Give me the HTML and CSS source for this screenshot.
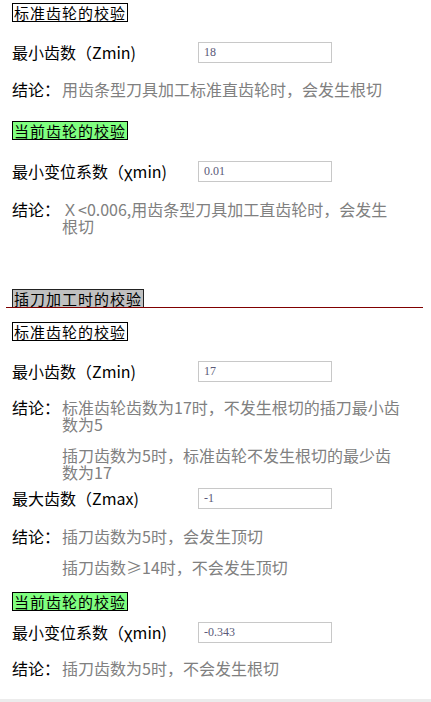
FILE: index.html
```html
<!DOCTYPE html>
<html lang="zh-CN">
<head>
<meta charset="utf-8">
<title>校验</title>
<link rel="stylesheet" href="styles.css">
</head>
<body>
<div class="page">
  <div class="sec sec-1">
    <span class="title title-white">标准齿轮的校验</span>
    <div class="row row-1"><span class="label">最小齿数（Zmin)</span><span class="input">18</span></div>
    <div class="concl concl-1"><span class="ck">结论：</span><div class="ct"><p>用齿条型刀具加工标准直齿轮时，会发生根切</p></div></div>
    <span class="title title-green t2">当前齿轮的校验</span>
    <div class="row row-2"><span class="label">最小变位系数（χmin)</span><span class="input">0.01</span></div>
    <div class="concl concl-2"><span class="ck">结论：</span><div class="ct"><p>Ｘ&lt;0.006,用齿条型刀具加工直齿轮时，会发生<br>根切</p></div></div>
  </div>
  <div class="divider"><span class="title title-gray">插刀加工时的校验</span></div>
  <div class="sec sec-2">
    <span class="title title-white t4">标准齿轮的校验</span>
    <div class="row row-3"><span class="label">最小齿数（Zmin)</span><span class="input">17</span></div>
    <div class="concl concl-3"><span class="ck">结论：</span><div class="ct"><p>标准齿轮齿数为17时，不发生根切的插刀最小齿<br>数为5</p><p>插刀齿数为5时，标准齿轮不发生根切的最少齿<br>数为17</p></div></div>
    <div class="row row-4"><span class="label">最大齿数（Zmax)</span><span class="input">-1</span></div>
    <div class="concl concl-4"><span class="ck">结论：</span><div class="ct"><p>插刀齿数为5时，会发生顶切</p><p>插刀齿数≥14时，不会发生顶切</p></div></div>
    <span class="title title-green t5">当前齿轮的校验</span>
    <div class="row row-5"><span class="label">最小变位系数（χmin)</span><span class="input">-0.343</span></div>
    <div class="concl concl-5"><span class="ck">结论：</span><div class="ct"><p>插刀齿数为5时，不会发生根切</p></div></div>
  </div>
  <div class="footer"></div>
</div>
</body>
</html>
```

FILE: styles.css
```css
html, body {
  margin: 0;
  padding: 0;
  background: #fff;
}
body {
  font-family: "Noto Sans CJK SC", "DejaVu Sans", sans-serif;
  font-size: 16px;
  color: #000;
  width: 431px;
  height: 702px;
  overflow: hidden;
}
.page {
  display: flex;
  flex-direction: column;
  height: 702px;
}
.sec {
  display: flex;
  flex-direction: column;
  align-items: flex-start;
  padding-left: 12px;
}
.title {
  display: inline-block;
  font-size: 15px;
  line-height: 17px;
  padding: 0 1px;
  border: 1px solid #000;
  white-space: nowrap;
  letter-spacing: 1px;
}
.title-white { background: #fff; }
.title-green { background: #80ff80; }
.title-gray { background: #c0c0c0; border-color: #222; border-bottom: none; }
.sec-1 > .title-white { margin-top: 3px; }
.row {
  display: flex;
  align-items: center;
  height: 20px;
}
.label {
  width: 186px;
  white-space: nowrap;
  line-height: 20px;
}
.input {
  box-sizing: border-box;
  width: 134px;
  height: 21px;
  border: 1px solid #c8c8c8;
  padding-left: 5px;
  font-family: "Liberation Serif", serif;
  font-size: 12px;
  line-height: 19px;
  color: #5a5a78;
}
.row-1 { margin-top: 20px; }
.concl {
  display: flex;
  align-items: flex-start;
}
.ck {
  width: 50px;
  line-height: 17px;
  flex: none;
}
.ct {
  color: #808080;
  line-height: 17px;
  display: flex;
  flex-direction: column;
  gap: 14px;
}
.ct p { margin: 0; white-space: nowrap; }
.concl-1 { margin-top: 19px; }
.t2 { margin-top: 23px; }
.row-2 { margin-top: 21px; }
.concl-2 { margin-top: 20px; }
.divider {
  margin: 54px 8px 0 6px;
  padding-left: 6px;
  border-bottom: 1px solid #800000;
  display: flex;
  align-items: flex-end;
}
.t4 { margin-top: 14px; }
.row-3 { margin-top: 20px; }
.concl-3 { margin-top: 18px; }
.row-4 { margin-top: 7px; }
.concl-4 { margin-top: 20px; }
.t5 { margin-top: 16px; }
.row-5 { margin-top: 11px; }
.concl-5 { margin-top: 18px; }
.footer {
  margin-top: auto;
  height: 3px;
  background: #ececec;
}
```
